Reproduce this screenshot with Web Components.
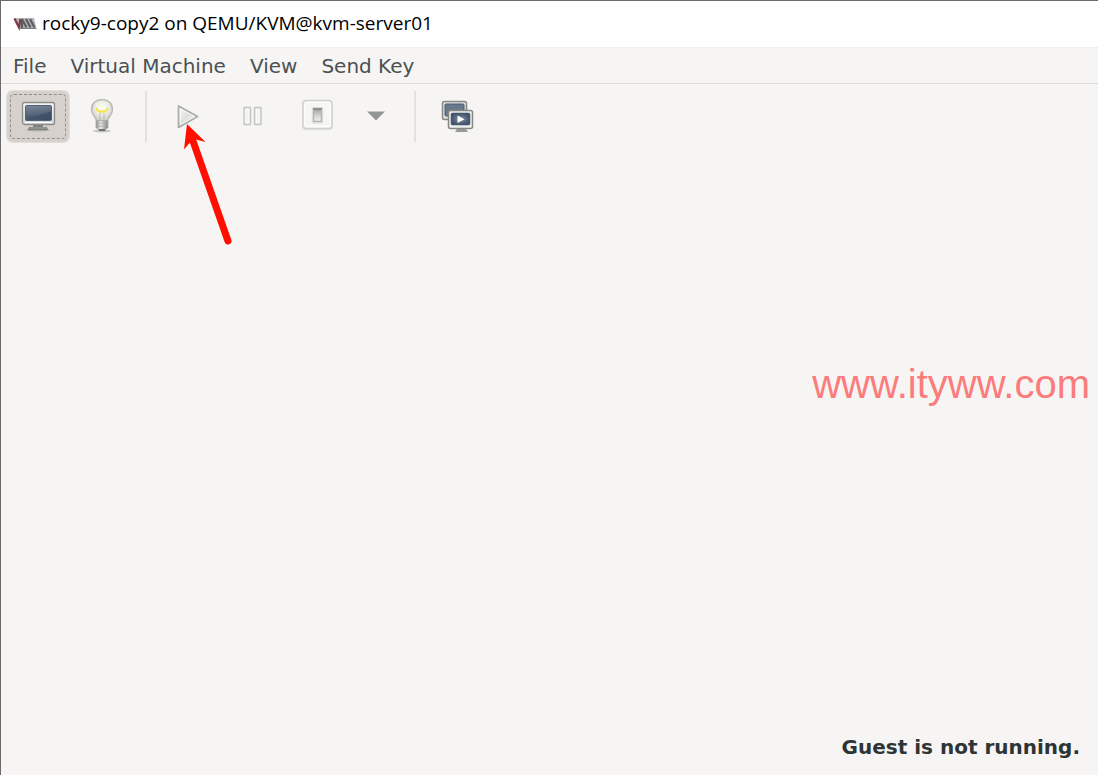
<!DOCTYPE html>
<html lang="en">
<head>
<meta charset="utf-8">
<title>rocky9-copy2 on QEMU/KVM@kvm-server01</title>
<style>
html, body { height: 100%; margin: 0; }
body { background: #f6f5f4; }
</style>
</head>
<body>
<vm-window>
  <vm-titlebar slot="title">rocky9-copy2 on QEMU/KVM@kvm-server01</vm-titlebar>
  <vm-menubar slot="menu">
    <vm-menu>File</vm-menu>
    <vm-menu>Virtual Machine</vm-menu>
    <vm-menu>View</vm-menu>
    <vm-menu>Send Key</vm-menu>
  </vm-menubar>
  <vm-toolbar slot="tools"></vm-toolbar>
  <vm-display>Guest is not running.</vm-display>
  <vm-watermark slot="overlay">www.ityww.com</vm-watermark>
  <vm-pointer slot="overlay"></vm-pointer>
</vm-window>
<script>
const define = (name, html, setup) => {
  const template = document.createElement('template');
  template.innerHTML = html;
  customElements.define(name, class extends HTMLElement {
    constructor() {
      super();
      this.attachShadow({ mode: 'open' }).append(template.content.cloneNode(true));
    }
    connectedCallback() { if (setup) setup(this, this.shadowRoot); }
  });
};

define('vm-window', `
<style>
:host { display: flex; flex-direction: column; position: relative; box-sizing: border-box; min-height: 100vh;
  border: solid #6b6b6d; border-width: 1px 0 0 1px; background: #f6f5f4; color: #2e3436;
  font-family: "DejaVu Sans", sans-serif; }
main { flex: 1; display: flex; }
::slotted(vm-display) { flex: 1; }
</style>
<slot name="title"></slot><slot name="menu"></slot><slot name="tools"></slot>
<main><slot></slot></main><slot name="overlay"></slot>`);

define('vm-titlebar', `
<style>
:host { display: block; }
header { display: flex; align-items: center; gap: 5px; box-sizing: border-box; height: 46px; padding: 0 12px 2px; background: #fff; color: #000; }
h1 { margin: 0; font: 400 19px/24px "Open Sans", sans-serif; white-space: nowrap; }
svg { display: block; }
</style>
<header>
<svg width="24" height="24" viewBox="0 0 24 24" fill="none" aria-hidden="true">
  <path d="M.5 7H21l2.500 11H6z" fill="#b4b6b7"/>
  <path d="M1.500 7.500l4.500 9 1.500-8.500" stroke="#7e3b48" stroke-width="2.200"/>
  <path d="M9 17V8l4.500 8.500M13 8l4.500 8.500M17 8l4.500 8.500" stroke="#5b5e61" stroke-width="2.200"/>
  <path d="M6 17.500h17.500" stroke="#7b7e80"/>
</svg>
<h1><slot></slot></h1>
</header>`);

define('vm-menubar', `
<style>
:host { display: block; }
nav { display: flex; box-sizing: border-box; height: 37px; padding-top: 1px; border-bottom: 1px solid #dddbd9; box-shadow: inset 0 1px #f0efee; }
</style>
<nav aria-label="Menu"><slot></slot></nav>`);

define('vm-menu', `
<style>
:host { display: flex; }
button { border: 0; margin: 0; padding: 0 12px; background: none; color: #4b5153; font: 20px/24px "DejaVu Sans", sans-serif; white-space: nowrap; }
</style>
<button type="button" aria-haspopup="menu"><slot></slot></button>`);

const icons = {
  console: `
  <defs>
    <linearGradient id="frame" x2="0" y2="1"><stop stop-color="#f4f4f2"/><stop offset="1" stop-color="#d8d9d6"/></linearGradient>
    <linearGradient id="screen" x2="1" y2="1"><stop stop-color="#51647a"/><stop offset="1" stop-color="#3a4b62"/></linearGradient>
    <linearGradient id="shine" x2="0" y2="1"><stop stop-color="#fff" stop-opacity=".22"/><stop offset="1" stop-color="#fff" stop-opacity=".04"/></linearGradient>
  </defs>
  <ellipse cx="18" cy="31" rx="12" ry="1.500" fill="#000" opacity=".18"/>
  <path d="M13 26h10v2h4l1 3H8l1-3h4z" fill="#7d807d"/><path d="M10 29h16" stroke="#a8aaa7"/>
  <rect x="2.500" y="3.500" width="32" height="22" rx="2" fill="url(#frame)" stroke="#8b8d88" stroke-width="1.300"/>
  <rect x="5.500" y="6.500" width="26" height="15" rx="1" fill="url(#screen)" stroke="#53627a"/>
  <path d="M6 7h25v5q-10 5-25 6z" fill="url(#shine)"/>
  <path d="M5 23.500h27" stroke="#fff"/>`,
  details: `
  <defs>
    <radialGradient id="glass" cy=".4"><stop stop-color="#fffef0"/><stop offset=".6" stop-color="#efefe7"/><stop offset="1" stop-color="#d3d5ce"/></radialGradient>
    <linearGradient id="base"><stop stop-color="#8b8e89"/><stop offset=".4" stop-color="#ececea"/><stop offset=".7" stop-color="#b1b3af"/><stop offset="1" stop-color="#858783"/></linearGradient>
  </defs>
  <ellipse cx="18" cy="32" rx="9" ry="1.500" fill="#000" opacity=".2"/>
  <path d="M12.500 22c0-4-5-5.500-5-11.500C7.500 4 12 .5 18 .5S28.500 4 28.500 10.500c0 6-5 7.500-5 11.500z" fill="url(#glass)" stroke="#b9bbb4" stroke-width="1.400"/>
  <path d="M16 22v-8M20 22v-8" stroke="#b8b9b0"/>
  <path d="M12.500 9.500c1 4 10 4 11 0-.5 4-2.500 2-4 3.500-1-1-2-1-3 0-1.500-1.500-3.500.5-4-3.500z" fill="#faef78" stroke="#f4e35c" stroke-width="2" stroke-linejoin="round"/>
  <path d="M12 21.500h12v7l-3 3h-6l-3-3z" fill="url(#base)" stroke="#a9aba6" stroke-width=".8"/>
  <path d="M12 24.500l12-1M12 27.500l12-1" stroke="#a2a49f" stroke-width=".8"/>
  <path d="M15 31h6" stroke="#555" stroke-width="1.500"/>`,
  run: `
  <defs><linearGradient id="play" x2="1" y2="1"><stop stop-color="#fcfcfb"/><stop offset=".45" stop-color="#dfe1de"/><stop offset="1" stop-color="#fff"/></linearGradient></defs>
  <path d="M8.500 7v21.500L27.500 17.500z" fill="url(#play)" stroke="#aaaca9" stroke-width="1.700" stroke-linejoin="round"/>
  <path d="M10.500 10v15.500L25 17.500z" fill="none" stroke="#fff" opacity=".6"/>`,
  pause: `
  <path d="M10 8.500h6.500v17H10zM20.500 8.500H27v17h-6.500z" fill="#f0f0ef" stroke="#c6c8c5" stroke-width="1.500" stroke-linejoin="round"/>
  <path d="M12 10.500h2.500v13H12zM22.500 10.500H25v13h-2.500z" fill="none" stroke="#fafafa"/>`,
  shutdown: `
  <defs><linearGradient id="rocker" x2="0" y2="1"><stop stop-color="#9b9d9a"/><stop offset=".5" stop-color="#cfd0ce"/><stop offset="1" stop-color="#f2f2f1"/></linearGradient></defs>
  <rect x="4.500" y="3" width="30" height="28.500" rx="3" fill="#000" opacity=".06"/>
  <rect x="5" y="1.500" width="29" height="28" rx="3" fill="#f6f6f5" stroke="#cfd1cd" stroke-width="1.500"/>
  <rect x="7" y="3.500" width="25" height="24" rx="2" fill="none" stroke="#fff"/>
  <rect x="13.500" y="8" width="12" height="17" rx="2" fill="#e9e9e7"/>
  <rect x="15.500" y="9.500" width="8" height="13" fill="url(#rocker)" stroke="#b5b6b3" stroke-width="1.500"/>
  <path d="M15 10h9" stroke="#858784" stroke-width="1.500"/>`,
  options: `<path d="M9 12.500h18l-9 9z" fill="#929796"/>`,
  snapshots: `
  <defs><radialGradient id="blue"><stop stop-color="#8091a4"/><stop offset="1" stop-color="#46566e"/></radialGradient></defs>
  <rect x="3.500" y="2.500" width="24" height="18" rx="2" fill="#e1e2df" stroke="#868884" stroke-width="1.500"/>
  <rect x="6" y="5" width="19" height="12" rx="1" fill="#68788d" stroke="#4d5c72"/>
  <path d="M18 30h9l2 3H16z" fill="#989a96"/>
  <rect x="9.500" y="11.500" width="24" height="18" rx="2" fill="#eeeeec" stroke="#868884" stroke-width="1.500"/>
  <rect x="12.500" y="14.500" width="18" height="11" rx="1" fill="url(#blue)" stroke="#45556c" stroke-width="1.500"/>
  <path d="M18.500 16.500v7.500l7-3.700z" fill="#fff"/>`
};

define('vm-tool', `
<style>
:host { display: block; }
button { display: flex; align-items: center; justify-content: center; box-sizing: border-box; width: 62px; height: 51px;
  margin: 0; padding: 0; border: 0; border-radius: 6px; background: none; }
:host([narrow]) button { width: 53px; }
:host([active]) button { background: #d6d1cd; box-shadow: 0 0 0 1px #e2deda; padding: 3px; }
.ring { display: flex; align-items: center; justify-content: center; box-sizing: border-box; width: 100%; height: 100%; }
:host([active]) .ring { border: 1px dashed #928e8a; border-radius: 4px; }
svg { display: block; width: 36px; height: 36px; }
</style>
<button type="button"><span class="ring"><svg viewBox="0 0 36 36" aria-hidden="true"></svg></span></button>`,
(host, root) => {
  root.querySelector('svg').innerHTML = icons[host.getAttribute('icon')];
  const button = root.querySelector('button');
  button.setAttribute('aria-label', host.getAttribute('label'));
  button.disabled = host.hasAttribute('disabled');
  if (host.hasAttribute('active')) button.setAttribute('aria-pressed', 'true');
});

define('vm-toolbar', `
<style>
:host { display: block; }
div { display: flex; gap: 2px; padding: 7px 6px 6px; }
hr { width: 2px; margin: 0 8px 0 10px; border: 0; background: #e3e1df; }
</style>
<div role="toolbar" aria-label="Virtual machine">
  <vm-tool icon="console" label="Console" active></vm-tool>
  <vm-tool icon="details" label="Details"></vm-tool>
  <hr>
  <vm-tool icon="run" label="Run" disabled></vm-tool>
  <vm-tool icon="pause" label="Pause" disabled></vm-tool>
  <vm-tool icon="shutdown" label="Shut down" disabled></vm-tool>
  <vm-tool icon="options" label="Shut down options" narrow></vm-tool>
  <hr>
  <vm-tool icon="snapshots" label="Snapshots"></vm-tool>
</div>`);

define('vm-display', `
<style>
:host { display: flex; align-items: flex-end; justify-content: flex-end; }
p { margin: 0; padding: 0 18px 16px; font: bold 20px/24px "DejaVu Sans", sans-serif; }
</style>
<p role="status"><slot></slot></p>`);

define('vm-watermark', `
<style>
:host { display: flex; align-items: center; position: absolute; top: 0; bottom: 8px; right: 8px; pointer-events: none;
  color: #fb7c7c; font: 40px/48px "Liberation Sans", sans-serif; }
</style>
<slot></slot>`);

define('vm-pointer', `
<style>
:host { display: block; position: absolute; left: 179px; top: 119px; pointer-events: none; }
svg { display: block; }
</style>
<svg width="60" height="130" viewBox="180 120 60 130" aria-hidden="true">
  <path d="M193 141L228 241" stroke="#ff0f00" stroke-width="7" stroke-linecap="round"/>
  <path d="M187 124l18.500 18-9.500-2.500-3 4-3-1-6 7z" fill="#ff0f00"/>
</svg>`);
</script>
</body>
</html>
